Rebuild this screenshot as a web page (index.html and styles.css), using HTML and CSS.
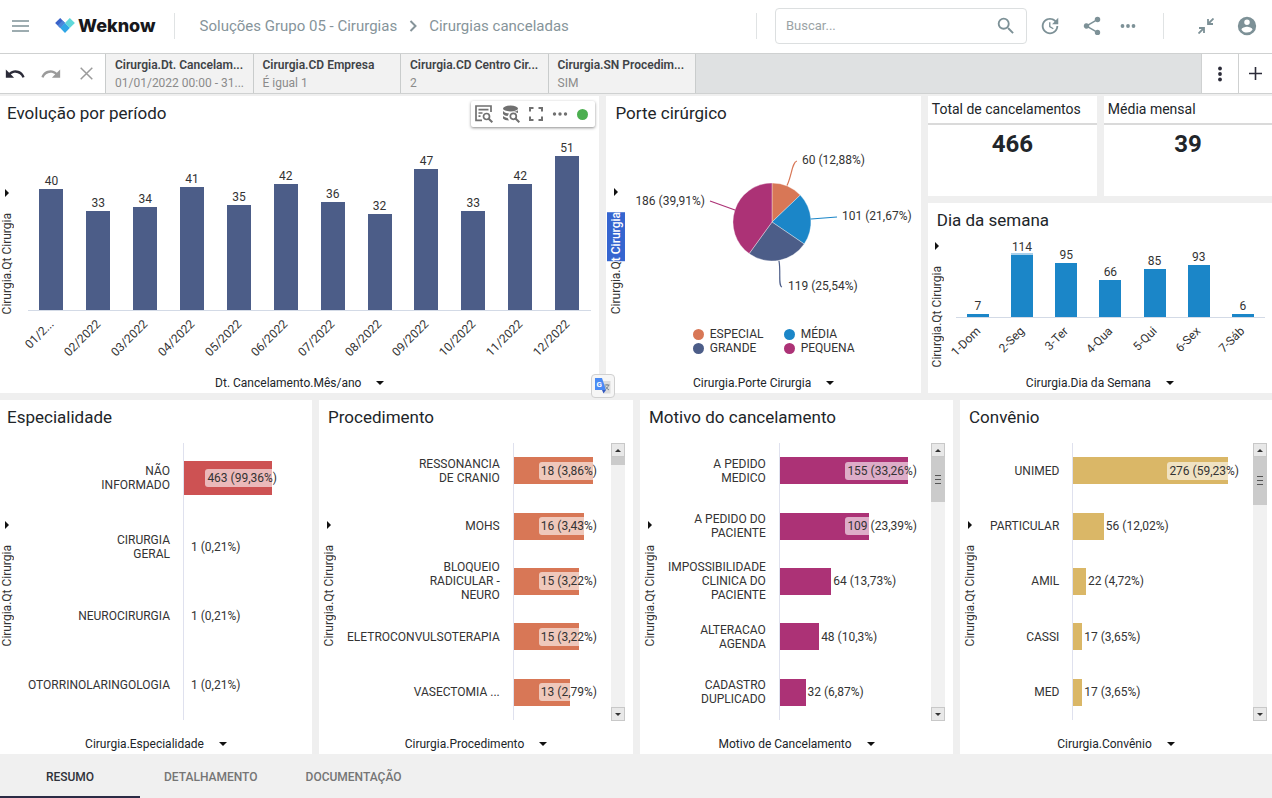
FILE: index.html
```html
<!DOCTYPE html>
<html lang="pt-BR">
<head>
<meta charset="utf-8">
<meta name="viewport" content="width=device-width, initial-scale=1">
<title>Weknow - Cirurgias canceladas</title>
<link rel="stylesheet" href="styles.css">
</head>
<body>
<header class="topbar">
  <button class="icon-btn menu-btn" aria-label="Menu"><svg width="17" height="12" viewBox="0 0 17 12"><path d="M0 1h17M0 6h17M0 11h17" stroke="currentColor" stroke-width="1.6"/></svg></button>
  <a class="logo" href="#">
    <svg width="20" height="15" viewBox="0 0 58 44"><path fill="#3a62c9" d="M0 15 15 0 29 14.500 15 29z"/><path fill="#4b86d9" d="M7.500 22 22 7.500 29 14.500 15 29z"/><path fill="#5fd8da" d="M29 14.500 43 0 58 15 43 29z"/><path fill="#2fa6e6" d="M15 29 29 14.500 43 29 29 44z"/></svg>
    <span>Weknow</span>
  </a>
  <span class="divider"></span>
  <nav class="crumbs" aria-label="Navegação">
    <a href="#">Soluções Grupo 05 - Cirurgias</a>
    <svg width="8" height="12" viewBox="0 0 8 12"><path d="M1.500 1l5 5-5 5" fill="none" stroke="currentColor" stroke-width="2"/></svg>
    <a href="#">Cirurgias canceladas</a>
  </nav>
  <div class="top-right">
    <span class="divider"></span>
    <form class="search">
      <input type="text" aria-label="Buscar" placeholder="Buscar...">
      <button class="icon-btn" type="button" aria-label="Pesquisar"><svg width="22" height="22" viewBox="0 0 24 24" fill="currentColor"><path d="M15.500 14h-.79l-.28-.27A6.470 6.470 0 0 0 16 9.500 6.500 6.500 0 1 0 9.500 16c1.610 0 3.090-.59 4.230-1.570l.27.28v.79l5 4.990L20.490 19l-4.990-5zm-6 0C7.010 14 5 11.990 5 9.500S7.010 5 9.500 5 14 7.010 14 9.500 11.990 14 9.500 14z"/></svg></button>
    </form>
    <div class="actions">
      <button class="icon-btn" aria-label="Atualizar"><svg width="22" height="22" viewBox="0 0 24 24" fill="currentColor"><path d="M21 10.120h-6.780l2.740-2.820c-2.730-2.700-7.150-2.800-9.880-.1-2.730 2.710-2.730 7.080 0 9.790s7.150 2.710 9.880 0C18.320 15.650 19 14.080 19 12.100h2c0 1.980-.88 4.550-2.640 6.290-3.510 3.480-9.210 3.480-12.720 0-3.500-3.470-3.530-9.110-.02-12.580s9.140-3.470 12.650 0L21 3v7.120zM12.500 8v4.250l3.500 2.080-.72 1.210L11 13V8h1.500z"/></svg></button>
      <button class="icon-btn" aria-label="Compartilhar"><svg width="22" height="22" viewBox="0 0 24 24" fill="currentColor"><path d="M18 16.080c-.76 0-1.440.3-1.960.77L8.910 12.700c.05-.23.09-.46.09-.7s-.04-.47-.09-.7l7.050-4.110c.54.5 1.250.81 2.040.81a3 3 0 1 0-3-3c0 .24.04.47.09.7L8.040 9.810A3 3 0 1 0 6 15c.79 0 1.500-.31 2.040-.81l7.120 4.160c-.05.21-.08.43-.08.65a2.920 2.920 0 1 0 2.920-2.920z"/></svg></button>
      <button class="icon-btn" aria-label="Mais opções"><svg width="16" height="6" viewBox="0 0 16 6" fill="currentColor"><circle cx="2.500" cy="3" r="1.900"/><circle cx="8" cy="3" r="1.900"/><circle cx="13.500" cy="3" r="1.900"/></svg></button>
    </div>
    <span class="divider"></span>
    <div class="actions account">
      <button class="icon-btn" aria-label="Recolher"><svg width="16" height="16" viewBox="0 0 16 16" fill="none" stroke="currentColor" stroke-width="1.800"><path d="M10 1v5h5M10 6l5.500-5.500M1 10h5v5M6 10 .5 15.500"/></svg></button>
      <button class="icon-btn" aria-label="Conta"><svg width="22" height="22" viewBox="0 0 24 24" fill="currentColor"><path d="M12 2a10 10 0 1 0 0 20 10 10 0 0 0 0-20zm0 3a3 3 0 1 1 0 6 3 3 0 0 1 0-6zm0 14.200a7.200 7.200 0 0 1-6-3.220c.03-1.990 4-3.080 6-3.080s5.970 1.090 6 3.080a7.200 7.200 0 0 1-6 3.220z"/></svg></button>
    </div>
  </div>
</header>

<section class="filterbar" aria-label="Filtros">
  <div class="history">
    <button class="icon-btn dark" aria-label="Desfazer"><svg width="22" height="22" viewBox="0 0 24 24" fill="currentColor"><path d="M12.500 8c-2.650 0-5.050.99-6.900 2.600L2 7v9h9l-3.620-3.620c1.390-1.160 3.160-1.880 5.120-1.880 3.540 0 6.550 2.310 7.600 5.500l2.370-.78C21.080 11.030 17.150 8 12.500 8z"/></svg></button>
    <button class="icon-btn muted" aria-label="Refazer"><svg width="22" height="22" viewBox="0 0 24 24" fill="currentColor"><path d="M18.400 10.600C16.550 8.990 14.150 8 11.500 8c-4.650 0-8.580 3.030-9.960 7.220L3.900 16c1.050-3.190 4.050-5.500 7.600-5.500 1.950 0 3.730.72 5.120 1.880L13 16h9V7l-3.600 3.600z"/></svg></button>
    <button class="icon-btn muted" aria-label="Limpar"><svg width="13" height="13" viewBox="0 0 13 13"><path d="M.7.7l11.600 11.600M12.300.7.7 12.300" stroke="currentColor" stroke-width="1.500"/></svg></button>
  </div>
  <div class="filters">
    <button class="filter"><strong>Cirurgia.Dt. Cancelam...</strong><span>01/01/2022 00:00 - 31...</span></button>
    <button class="filter"><strong>Cirurgia.CD Empresa</strong><span>É igual 1</span></button>
    <button class="filter"><strong>Cirurgia.CD Centro Cir...</strong><span>2</span></button>
    <button class="filter"><strong>Cirurgia.SN Procedim...</strong><span>SIM</span></button>
  </div>
  <div class="filter-tools">
    <button class="icon-btn dark" aria-label="Opções de filtro"><svg width="6" height="16" viewBox="0 0 6 16" fill="currentColor"><circle cx="3" cy="2.500" r="1.900"/><circle cx="3" cy="8" r="1.900"/><circle cx="3" cy="13.500" r="1.900"/></svg></button>
    <button class="icon-btn dark" aria-label="Adicionar filtro"><svg width="13" height="13" viewBox="0 0 13 13"><path d="M6.500 0v13M0 6.500h13" stroke="currentColor" stroke-width="1.600"/></svg></button>
  </div>
</section>

<main class="dashboard">
  <div class="row row-top">
    <section class="panel panel-edge">
      <h2>Evolução por período</h2>
      <div class="chart-tools">
        <button class="icon-btn" aria-label="Detalhar"><svg width="18" height="18" viewBox="0 0 18 18" fill="none" stroke="currentColor" stroke-width="1.700"><path d="M7 15.300H1V1h15v6M3.500 4.700h10M3.500 8h4M3.500 11.200h2"/><circle cx="11.500" cy="11.500" r="3"/><path d="M13.700 13.700l3.600 3.600" stroke-width="2"/></svg></button>
        <button class="icon-btn" aria-label="Dados"><svg width="18" height="18" viewBox="0 0 18 18"><ellipse cx="8.500" cy="3.500" rx="7.500" ry="3" fill="currentColor"/><path d="M1 6c2 2.200 4 2.400 6 2.400L5.500 11C3 10.700 1.500 9.800 1 9zM1 11c1.500 1.300 3 1.700 4.600 1.900L7 15.500c-3-.1-5-.8-6-2z" fill="currentColor"/><path d="M12 6.700c2-.2 3-.6 4-1.400V8z" fill="currentColor"/><circle cx="11.300" cy="11.300" r="3" fill="none" stroke="currentColor" stroke-width="1.700"/><path d="M13.500 13.500l3.800 3.800" stroke="currentColor" stroke-width="2"/></svg></button>
        <button class="icon-btn" aria-label="Tela cheia"><svg width="14" height="14" viewBox="0 0 14 14"><path d="M1 4.500V1h3.500M9.500 1H13v3.500M13 9.500V13H9.500M4.500 13H1V9.500" fill="none" stroke="currentColor" stroke-width="2"/></svg></button>
        <button class="icon-btn" aria-label="Mais"><svg width="16" height="6" viewBox="0 0 16 6" fill="currentColor"><circle cx="2.500" cy="3" r="1.700"/><circle cx="8" cy="3" r="1.700"/><circle cx="13.500" cy="3" r="1.700"/></svg></button>
        <span class="status"></span>
      </div>
      <div class="chart">
        <button class="y-axis"><span>Cirurgia.Qt Cirurgia</span></button>
        <div class="columns columns-navy">
          <div class="col"><div class="stack"><b>40</b><i style="height:67%"></i></div><div class="tick"><span>01/2...</span></div></div>
          <div class="col"><div class="stack"><b>33</b><i style="height:55%"></i></div><div class="tick"><span>02/2022</span></div></div>
          <div class="col"><div class="stack"><b>34</b><i style="height:57%"></i></div><div class="tick"><span>03/2022</span></div></div>
          <div class="col"><div class="stack"><b>41</b><i style="height:68.500%"></i></div><div class="tick"><span>04/2022</span></div></div>
          <div class="col"><div class="stack"><b>35</b><i style="height:58.500%"></i></div><div class="tick"><span>05/2022</span></div></div>
          <div class="col"><div class="stack"><b>42</b><i style="height:70%"></i></div><div class="tick"><span>06/2022</span></div></div>
          <div class="col"><div class="stack"><b>36</b><i style="height:60%"></i></div><div class="tick"><span>07/2022</span></div></div>
          <div class="col"><div class="stack"><b>32</b><i style="height:53.500%"></i></div><div class="tick"><span>08/2022</span></div></div>
          <div class="col"><div class="stack"><b>47</b><i style="height:78.500%"></i></div><div class="tick"><span>09/2022</span></div></div>
          <div class="col"><div class="stack"><b>33</b><i style="height:55%"></i></div><div class="tick"><span>10/2022</span></div></div>
          <div class="col"><div class="stack"><b>42</b><i style="height:70%"></i></div><div class="tick"><span>11/2022</span></div></div>
          <div class="col"><div class="stack"><b>51</b><i style="height:85.500%"></i></div><div class="tick"><span>12/2022</span></div></div>
        </div>
      </div>
      <button class="x-axis">Dt. Cancelamento.Mês/ano</button>
      <button class="translate" aria-label="Traduzir"><svg width="18" height="18" viewBox="0 0 18 18"><path fill="#dcdcdc" d="M7 4h9.500v12.500H10z"/><path fill="#4a8af4" d="M1 1h7l4 12H1z"/><path fill="#3359c0" d="M8 13h4l-2.500 3.500z"/><text x="2.500" y="10" font-family="Roboto, sans-serif" font-size="8" font-weight="700" fill="#fff">G</text><path d="M10.500 8h5M13 7v1M14.500 8c-.4 2-1.600 3.500-3 4.500M11.500 9.500c.8 1.500 2 2.500 3.500 3.500" fill="none" stroke="#7b8790"/></svg></button>
    </section>

    <section class="panel">
      <h2>Porte cirúrgico</h2>
      <div class="chart">
        <button class="y-axis"><span>Cirurgia.Q<mark>t Cirurgia</mark></span></button>
        <div class="pie-area">
          <svg class="pie" width="286" height="197" viewBox="0 0 286 197" role="img" aria-label="Porte cirúrgico">
            <g stroke="#fff" stroke-opacity=".5" stroke-width=".7">
              <path fill="#d87756" d="M137 92V53A39 39 0 0 1 165.250 65.110z"/>
              <path fill="#1b86c8" d="M137 92 165.250 65.110A39 39 0 0 1 169.220 113.970z"/>
              <path fill="#4c5d88" d="M137 92 169.220 113.970A39 39 0 0 1 114.170 123.620z"/>
              <path fill="#ac3276" d="M137 92 114.170 123.620A39 39 0 0 1 137 53z"/>
            </g>
            <g fill="none" stroke-width="1.200">
              <path stroke="#d87756" d="M152 55.500C157 45 157 32 162 31"/>
              <path stroke="#1b86c8" d="M176 89 202 87"/>
              <path stroke="#4c5d88" d="M144 131C146 142 143 156 147 157"/>
              <path stroke="#ac3276" d="M100 80 75 71"/>
            </g>
            <g class="pie-text">
              <text x="167" y="34">60 (12,88%)</text>
              <text x="207" y="90">101 (21,67%)</text>
              <text x="153" y="160">119 (25,54%)</text>
              <text x="70" y="75" text-anchor="end">186 (39,91%)</text>
            </g>
          </svg>
          <ul class="legend">
            <li class="c-orange">ESPECIAL</li>
            <li class="c-blue">MÉDIA</li>
            <li class="c-navy">GRANDE</li>
            <li class="c-magenta">PEQUENA</li>
          </ul>
        </div>
      </div>
      <button class="x-axis">Cirurgia.Porte Cirurgia</button>
    </section>

    <div class="side">
      <div class="kpis">
        <section class="kpi"><h3>Total de cancelamentos</h3><p>466</p></section>
        <section class="kpi"><h3>Média mensal</h3><p>39</p></section>
      </div>
      <section class="panel">
        <h2>Dia da semana</h2>
        <div class="chart">
          <button class="y-axis"><span>Cirurgia.Qt Cirurgia</span></button>
          <div class="columns columns-blue">
            <div class="col"><div class="stack"><b>7</b><i style="height:4%"></i></div><div class="tick"><span>1-Dom</span></div></div>
            <div class="col"><div class="stack"><b class="overlap">114</b><i class="capped" style="height:80%"></i></div><div class="tick"><span>2-Seg</span></div></div>
            <div class="col"><div class="stack"><b>95</b><i style="height:67%"></i></div><div class="tick"><span>3-Ter</span></div></div>
            <div class="col"><div class="stack"><b>66</b><i style="height:46%"></i></div><div class="tick"><span>4-Qua</span></div></div>
            <div class="col"><div class="stack"><b>85</b><i style="height:60%"></i></div><div class="tick"><span>5-Qui</span></div></div>
            <div class="col"><div class="stack"><b>93</b><i style="height:65%"></i></div><div class="tick"><span>6-Sex</span></div></div>
            <div class="col"><div class="stack"><b>6</b><i style="height:4%"></i></div><div class="tick"><span>7-Sáb</span></div></div>
          </div>
        </div>
        <button class="x-axis">Cirurgia.Dia da Semana</button>
      </section>
    </div>
  </div>

  <div class="row row-bottom">
    <section class="panel panel-edge">
      <h2>Especialidade</h2>
      <div class="chart">
        <button class="y-axis"><span>Cirurgia.Qt Cirurgia</span></button>
        <div class="bars bars-red">
          <div class="cat">NÃO<br>INFORMADO</div><div class="val"><i style="width:69%"></i><b class="over over-far">463 (99,36%)</b></div>
          <div class="cat">CIRURGIA<br>GERAL</div><div class="val"><b class="no-bar">1 (0,21%)</b></div>
          <div class="cat">NEUROCIRURGIA</div><div class="val"><b class="no-bar">1 (0,21%)</b></div>
          <div class="cat">OTORRINOLARINGOLOGIA</div><div class="val"><b class="no-bar">1 (0,21%)</b></div>
        </div>
      </div>
      <button class="x-axis">Cirurgia.Especialidade</button>
    </section>

    <section class="panel">
      <h2>Procedimento</h2>
      <div class="chart">
        <button class="y-axis"><span>Cirurgia.Qt Cirurgia</span></button>
        <div class="bars bars-orange">
          <div class="cat">RESSONANCIA<br>DE CRANIO</div><div class="val"><i style="width:81%"></i><b class="over">18 (3,86%)</b></div>
          <div class="cat">MOHS</div><div class="val"><i style="width:72%"></i><b class="over">16 (3,43%)</b></div>
          <div class="cat">BLOQUEIO<br>RADICULAR -<br>NEURO</div><div class="val"><i style="width:67%"></i><b class="over">15 (3,22%)</b></div>
          <div class="cat">ELETROCONVULSOTERAPIA</div><div class="val"><i style="width:67%"></i><b class="over">15 (3,22%)</b></div>
          <div class="cat">VASECTOMIA ...</div><div class="val"><i style="width:58%"></i><b class="over">13 (2,79%)</b></div>
        </div>
        <div class="scroll"><button class="up" aria-label="Rolar para cima"></button><div class="track"><div class="thumb" style="height:3%"></div></div><button class="down" aria-label="Rolar para baixo"></button></div>
      </div>
      <button class="x-axis">Cirurgia.Procedimento</button>
    </section>

    <section class="panel">
      <h2>Motivo do cancelamento</h2>
      <div class="chart">
        <button class="y-axis"><span>Cirurgia.Qt Cirurgia</span></button>
        <div class="bars bars-magenta">
          <div class="cat">A PEDIDO<br>MEDICO</div><div class="val"><i style="width:85%"></i><b class="over">155 (33,26%)</b></div>
          <div class="cat">A PEDIDO DO<br>PACIENTE</div><div class="val"><i style="width:59%"></i><b class="over">109 (23,39%)</b></div>
          <div class="cat">IMPOSSIBILIDADE<br>CLINICA DO<br>PACIENTE</div><div class="val"><i style="width:34%"></i><b>64 (13,73%)</b></div>
          <div class="cat">ALTERACAO<br>AGENDA</div><div class="val"><i style="width:26%"></i><b>48 (10,3%)</b></div>
          <div class="cat">CADASTRO<br>DUPLICADO</div><div class="val"><i style="width:17%"></i><b>32 (6,87%)</b></div>
        </div>
        <div class="scroll"><button class="up" aria-label="Rolar para cima"></button><div class="track"><div class="thumb grip" style="height:18%"></div></div><button class="down" aria-label="Rolar para baixo"></button></div>
      </div>
      <button class="x-axis">Motivo de Cancelamento</button>
    </section>

    <section class="panel panel-last">
      <h2>Convênio</h2>
      <div class="chart">
        <button class="y-axis"><span>Cirurgia.Qt Cirurgia</span></button>
        <div class="bars bars-gold">
          <div class="cat">UNIMED</div><div class="val"><i style="width:86%"></i><b class="over">276 (59,23%)</b></div>
          <div class="cat">PARTICULAR</div><div class="val"><i style="width:17%"></i><b>56 (12,02%)</b></div>
          <div class="cat">AMIL</div><div class="val"><i style="width:7%"></i><b>22 (4,72%)</b></div>
          <div class="cat">CASSI</div><div class="val"><i style="width:5%"></i><b>17 (3,65%)</b></div>
          <div class="cat">MED</div><div class="val"><i style="width:5%"></i><b>17 (3,65%)</b></div>
        </div>
        <div class="scroll"><button class="up" aria-label="Rolar para cima"></button><div class="track"><div class="thumb grip" style="height:19%"></div></div><button class="down" aria-label="Rolar para baixo"></button></div>
      </div>
      <button class="x-axis">Cirurgia.Convênio</button>
    </section>
  </div>
</main>

<nav class="tabs" aria-label="Abas">
  <button class="tab active">RESUMO</button>
  <button class="tab">DETALHAMENTO</button>
  <button class="tab">DOCUMENTAÇÃO</button>
</nav>
</body>
</html>
```
FILE: styles.css
```css
* { box-sizing: border-box; }

body {
  margin: 0;
  min-height: 100vh;
  display: flex;
  flex-direction: column;
  background: #efefef;
  color: #212529;
  font: 12px/14px Roboto, sans-serif;
}

button {
  margin: 0;
  padding: 0;
  border: 0;
  background: none;
  color: inherit;
  font: inherit;
  cursor: pointer;
}

a { color: inherit; text-decoration: none; }
svg { display: block; flex: none; }
h2, h3, p, ul { margin: 0; padding: 0; }
b, i { font-weight: 400; font-style: normal; }

.icon-btn {
  display: flex;
  align-items: center;
  justify-content: center;
  color: #7d9197;
}
.icon-btn.dark { color: #2b2b38; }
.icon-btn.muted { color: #9b9b9b; }

/* Top bar */
.topbar {
  display: flex;
  align-items: center;
  height: 54px;
  padding: 0 14px 2px 12px;
  background: #fff;
  border-bottom: 1px solid #cfd1d1;
}
.menu-btn { margin-right: 26px; }
.logo {
  display: flex;
  align-items: center;
  gap: 3px;
  margin-right: 18px;
  color: #17181c;
  font: 800 18px/24px Inter, sans-serif;
}
.divider { width: 1px; height: 26px; background: #e0e3e4; }
.crumbs {
  display: flex;
  align-items: center;
  gap: 12px;
  margin-left: 25px;
  color: #86949a;
  font-size: 15px;
  line-height: 20px;
  white-space: nowrap;
}
.top-right { display: flex; align-items: center; margin-left: auto; }
.search {
  display: flex;
  align-items: center;
  width: 252px;
  height: 36px;
  margin-left: 18px;
  padding: 0 9px 0 10px;
  border: 1px solid #dcdfe0;
  border-radius: 4px;
}
.search input {
  flex: 1;
  min-width: 0;
  padding: 0;
  border: 0;
  outline: 0;
  background: none;
  font: 13px/20px Roboto, sans-serif;
}
.search input::placeholder { color: #9ba3a6; }
.actions {
  display: grid;
  grid-template-columns: 22px 22px 10px;
  gap: 20px;
  margin: 0 30px 0 12px;
}
.actions.account {
  grid-template-columns: 16px 22px;
  gap: 22px;
  margin: 0 0 0 34px;
}

/* Filter bar */
.filterbar {
  display: flex;
  height: 40px;
  background: #dfe1e2;
  border-bottom: 1px solid #cfd1d1;
}
.history {
  display: grid;
  grid-template-columns: 29px 44px 27px;
  width: 105px;
  background: #fff;
}
.filters { display: flex; flex: 0 1 591px; border-left: 1px solid #c9cccc; }
.filter {
  display: flex;
  flex: 1;
  flex-direction: column;
  gap: 4px;
  min-width: 0;
  padding: 4px 9px;
  border-right: 1px solid #c9cccc;
  background: #f2f2f2;
  color: #8b8b8b;
  text-align: left;
  white-space: nowrap;
}
.filter strong { color: #404347; font-weight: 600; }
.filter-tools {
  display: grid;
  grid-template-columns: 37px 34px;
  margin-left: auto;
}
.filter-tools .icon-btn { background: #fff; border-left: 1px solid #cfd1d1; }

/* Dashboard grid */
.dashboard {
  display: grid;
  flex: 1;
  grid-template-rows: 297fr 354fr;
  gap: 7px;
  padding-top: 2px;
}
.row { display: grid; gap: 7px; min-width: 0; }
.row-top { grid-template-columns: 599fr 314fr 344fr; }
.row-bottom { grid-template-columns: 312fr 314fr 313fr 312fr; }
.side { display: grid; grid-template-rows: 100px 1fr; gap: 7px; min-width: 0; }
.kpis { display: grid; grid-template-columns: 169fr 168fr; gap: 7px; }
.kpi { background: #fff; text-align: center; }
.kpi h3 {
  height: 29px;
  padding: 3px 4px;
  border-bottom: 2px solid #dadada;
  font-size: 14px;
  font-weight: 400;
  line-height: 20px;
  text-align: left;
}
.kpi p { padding-top: 5px; font-size: 24px; font-weight: 700; line-height: 28px; }

.panel {
  position: relative;
  display: flex;
  flex-direction: column;
  min-width: 0;
  background: #fff;
}
.panel h2 {
  height: 34px;
  padding: 6px 9px;
  font-size: 17px;
  font-weight: 400;
  line-height: 22px;
}
.panel-edge h2 { padding-left: 7px; }
.chart { display: flex; flex: 1; min-height: 0; color: #333; }

.y-axis {
  display: flex;
  flex: none;
  flex-direction: column;
  align-items: center;
  justify-content: center;
  gap: 16px;
  width: 28px;
  padding: 1px 9px 0 0;
}
.panel-edge .y-axis { padding-right: 14px; }
.panel-last .y-axis { width: 30px; padding-right: 11px; }
.y-axis::before {
  content: "";
  border: solid transparent;
  border-width: 4px 0 4px 4px;
  border-left-color: #111;
}
.y-axis span { writing-mode: vertical-rl; transform: rotate(180deg); }
.y-axis mark { padding: 0 2px; background: #3565d0; color: #fff; font-weight: 500; }
.x-axis {
  display: flex;
  align-items: center;
  justify-content: center;
  gap: 15px;
  align-self: center;
  height: 21px;
}
.x-axis::after {
  content: "";
  border: solid transparent;
  border-width: 4px 4px 0;
  border-top-color: #111;
}

.chart-tools {
  position: absolute;
  top: 5px;
  right: 4px;
  display: flex;
  align-items: center;
  gap: 9px;
  height: 26px;
  padding: 0 7px 0 4px;
  background: #fff;
  border-radius: 2px;
  box-shadow: 0 1px 3px rgba(0, 0, 0, .45);
}
.chart-tools .icon-btn { color: #707070; }
.status { width: 11px; height: 11px; border-radius: 50%; background: #4caf50; }
.translate {
  position: absolute;
  right: -16px;
  bottom: -5px;
  z-index: 1;
  display: grid;
  place-items: center;
  width: 24px;
  height: 24px;
  border: 1px solid #d0d0d0;
  border-radius: 4px;
  background: #f6f6f6;
}

/* Column charts */
.columns { display: flex; flex: 1; min-width: 0; margin-right: 9px; }
.columns-navy { --fill: #4c5d88; --bar: 24px; --ticks: 62px; }
.columns-blue { --fill: #1b86c8; --bar: 22px; --ticks: 55px; margin-right: 7px; }
.col { display: flex; flex: 1 1 0; flex-direction: column; min-width: 0; }
.stack {
  display: flex;
  flex: 1;
  flex-direction: column;
  align-items: center;
  justify-content: flex-end;
  min-height: 0;
}
.stack b { margin-bottom: 1px; }
.stack b.overlap { margin-bottom: -1px; }
.stack i { flex: none; width: var(--bar); background: var(--fill); }
.stack i.capped { border-top: 2px solid #a9d0ea; }
.tick {
  display: flex;
  justify-content: flex-end;
  height: var(--ticks);
  padding: 6px calc(50% + 5px) 0 0;
  border-top: 1px solid #d3dae6;
  white-space: nowrap;
}
.tick span { height: 14px; transform: rotate(-45deg); transform-origin: top right; }

/* Pie chart */
.pie-area {
  display: flex;
  flex: 1;
  flex-direction: column;
  align-items: center;
  min-width: 0;
}
.pie-text { fill: #333; font: 12px Roboto, sans-serif; }
.legend {
  display: grid;
  grid-template-columns: 91px max-content;
  margin-right: 8px;
  list-style: none;
}
.legend li { display: flex; align-items: center; gap: 6px; }
.legend li::before {
  content: "";
  flex: none;
  width: 11px;
  height: 11px;
  border-radius: 50%;
  background: var(--dot);
}
.c-orange { --dot: #d87756; }
.c-blue { --dot: #1b86c8; }
.c-navy { --dot: #4c5d88; }
.c-magenta { --dot: #ac3276; }

/* Horizontal bar charts */
.bars {
  display: grid;
  flex: 1;
  grid-template-columns: max-content 1fr;
  grid-auto-rows: 1fr;
  margin: 9px 0 13px;
}
.bars-red { --fill: #cd5253; }
.bars-orange { --fill: #d87756; }
.bars-magenta { --fill: #ac3276; }
.bars-gold { --fill: #dab767; }
.cat {
  display: flex;
  align-items: center;
  justify-content: flex-end;
  padding-right: 13px;
  text-align: right;
}
.val {
  position: relative;
  display: flex;
  align-items: center;
  gap: 2px;
  min-width: 0;
  border-left: 1px solid #dfe1ee;
  white-space: nowrap;
}
.val i { flex: none; height: 49%; background: var(--fill); }
.val .no-bar { padding-left: 7px; }
.val .over {
  position: absolute;
  right: 12px;
  padding: 2px;
  border-radius: 3px;
  background: rgba(255, 255, 255, .6);
}
.val .over-far { right: 33px; }

.scroll {
  display: flex;
  flex: none;
  flex-direction: column;
  width: 14px;
  margin: 9px 8px 12px 0;
  background: #f1f1f1;
}
.panel-last .scroll { margin-right: 5px; }
.scroll button {
  display: grid;
  place-items: center;
  height: 14px;
  border: 1px solid #c8c8c8;
  background: #e8e8e8;
}
.scroll button::before { content: ""; border: 3px solid transparent; }
.scroll .up::before { border-top: 0; border-bottom-color: #333; }
.scroll .down::before { border-bottom: 0; border-top-color: #333; }
.track { flex: 1; }
.thumb { display: grid; place-items: center; background: #cbcbcb; }
.grip::before {
  content: "";
  width: 6px;
  height: 7px;
  border: solid #555;
  border-width: 1px 0;
  background: linear-gradient(#555, #555) center / 100% 1px no-repeat;
}

/* Tabs */
.tabs { display: flex; height: 44px; background: #f0f0f0; }
.tab {
  padding: 4px 24px 0;
  border-bottom: 2px solid transparent;
  color: #757575;
  font-weight: 500;
}
.tab.active { min-width: 140px; border-bottom-color: #2b2b45; color: #2f323a; }
```
